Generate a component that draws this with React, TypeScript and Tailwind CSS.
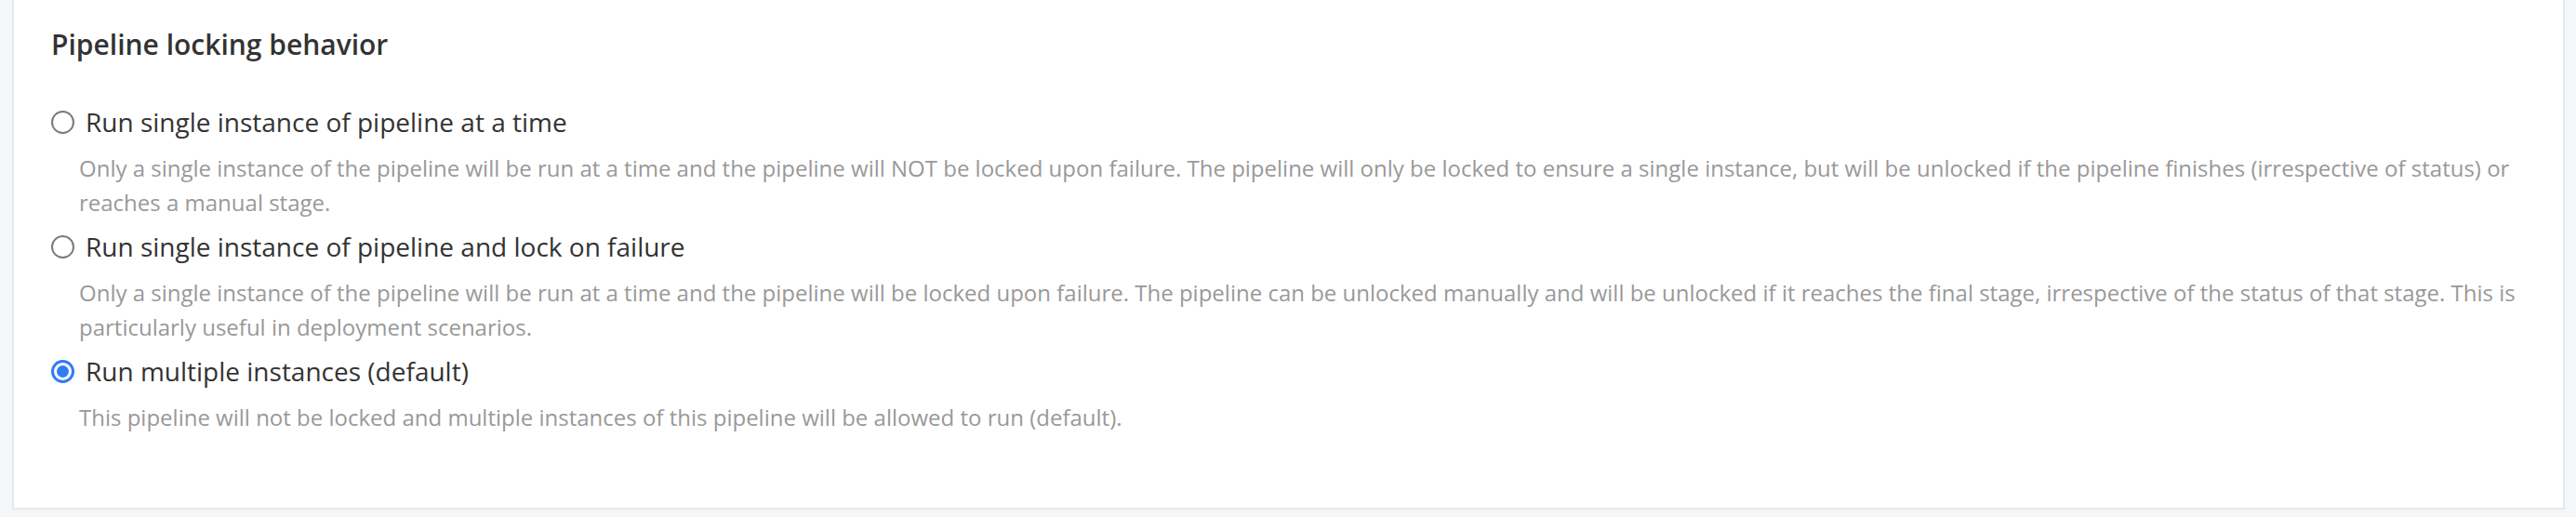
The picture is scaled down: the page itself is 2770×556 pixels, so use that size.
import { useState } from "react";

const options = [
  {
    id: "single",
    label: "Run single instance of pipeline at a time",
    help: "Only a single instance of the pipeline will be run at a time and the pipeline will NOT be locked upon failure. The pipeline will only be locked to ensure a single instance, but will be unlocked if the pipeline finishes (irrespective of status) or reaches a manual stage.",
  },
  {
    id: "lock",
    label: "Run single instance of pipeline and lock on failure",
    help: "Only a single instance of the pipeline will be run at a time and the pipeline will be locked upon failure. The pipeline can be unlocked manually and will be unlocked if it reaches the final stage, irrespective of the status of that stage. This is particularly useful in deployment scenarios.",
  },
  {
    id: "multiple",
    label: "Run multiple instances (default)",
    help: "This pipeline will not be locked and multiple instances of this pipeline will be allowed to run (default).",
  },
];

const Radio = ({ checked }: { checked: boolean }) =>
  checked ? (
    <span className="w-[25px] h-[25px] shrink-0 rounded-full border-[3px] border-[#2f7cf6] bg-white flex items-center justify-center">
      <span className="w-[13px] h-[13px] rounded-full bg-[#2f7cf6]" />
    </span>
  ) : (
    <span className="w-[25px] h-[25px] shrink-0 rounded-full border-2 border-[#7a7a7a] bg-white" />
  );

const App = () => {
  const [value, setValue] = useState("multiple");

  return (
    <div className="min-h-[556px] bg-[#f4f6f8] pl-[13px] pr-[12px] font-['Open_Sans',sans-serif]">
      <section className="bg-white border-x-2 border-b-2 border-[#e6e9ec] pl-[40px] pr-[40px] pt-[28px] pb-[79px]">
        <h2 className="text-[30px] leading-[40px] font-semibold text-[#333]">Pipeline locking behavior</h2>

        <div className="mt-[44px] flex flex-col gap-[10px]">
          {options.map((o) => (
            <div key={o.id}>
              <label
                className="flex items-center gap-[12px] cursor-pointer"
                onClick={() => setValue(o.id)}
              >
                <Radio checked={value === o.id} />
                <span className="text-[28px] leading-[38px] text-[#333]">{o.label}</span>
              </label>
              <p className="mt-[12px] ml-[30px] text-[24px] leading-[37px] text-[#999]">{o.help}</p>
            </div>
          ))}
        </div>
      </section>
    </div>
  );
};

export default App;
